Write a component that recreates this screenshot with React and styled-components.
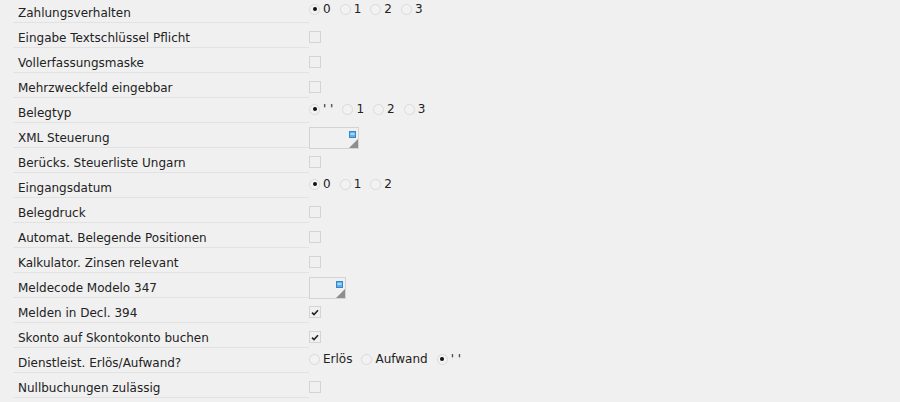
import React from 'react';
import styled, { createGlobalStyle } from 'styled-components';

const GlobalStyle = createGlobalStyle`
  html, body {
    margin: 0;
    padding: 0;
    background: #f0f0f0;
  }
  body {
    font-family: "DejaVu Sans", Verdana, sans-serif;
    font-size: 12px;
    color: #222;
    overflow: hidden;
  }
`;

const Form = styled.div`
  display: flex;
  flex-direction: column;
  margin-top: -2px;
  padding-left: 13px;
`;

const Row = styled.div`
  display: flex;
  align-items: flex-start;
  height: 25px;
`;

const Label = styled.div`
  box-sizing: border-box;
  width: 296px;
  height: 25px;
  padding: 6px 0 0 5px;
  line-height: 18px;
  border-bottom: 1px solid #e2e2e2;
  white-space: nowrap;
`;

// top offset differs per control kind, as in the original form
const Control = styled.div`
  box-sizing: border-box;
  display: flex;
  align-items: flex-start;
  height: 25px;
  padding-top: ${({ $top }) => $top}px;
`;

const Box = styled.span`
  box-sizing: border-box;
  display: inline-flex;
  align-items: center;
  justify-content: center;
  width: 12px;
  height: 12px;
  border: 1px solid #d4d4d4;
  background: #f0f0f0;
`;

const RadioGroup = styled.div`
  display: flex;
  align-items: center;
  gap: 9px;
`;

const RadioItem = styled.label`
  display: flex;
  align-items: center;
  gap: 3px;
  line-height: 14px;
`;

const Circle = styled.span`
  box-sizing: border-box;
  position: relative;
  width: 11px;
  height: 11px;
  border-radius: 50%;
  border: 1px solid #dadada;
  background: #f2f2f2;

  &::after {
    content: '';
    display: ${({ $on }) => ($on ? 'block' : 'none')};
    position: absolute;
    left: 2.5px;
    top: 2.5px;
    width: 4px;
    height: 4px;
    border-radius: 50%;
    background: #111;
  }
`;

const Combo = styled.div`
  box-sizing: border-box;
  position: relative;
  width: ${({ $w }) => $w}px;
  height: 22px;
  border: 1px solid #d3d3d3;
  background: #f0f0f0;
`;

const ValueHelp = styled.svg`
  position: absolute;
  right: 2px;
  top: 3px;
`;

const Corner = styled.svg`
  position: absolute;
  right: 0;
  bottom: 0;
`;

const Check = () => (
  <svg width="8" height="7" viewBox="0 0 8 7">
    <path d="M1 3.6 L3 5.6 L7 1.2" fill="none" stroke="#222" strokeWidth="1.6" />
  </svg>
);

const Checkbox = ({ checked }) => <Box>{checked && <Check />}</Box>;

const Radios = ({ options, value }) => (
  <RadioGroup>
    {options.map((o) => (
      <RadioItem key={o}>
        <Circle $on={o === value} />
        <span>{o}</span>
      </RadioItem>
    ))}
  </RadioGroup>
);

const ComboBox = ({ width }) => (
  <Combo $w={width}>
    <ValueHelp width="7" height="7" viewBox="0 0 7 7">
      <rect x="0.5" y="0.5" width="6" height="6" fill="#5fb0e6" stroke="#2f8ad0" />
      <rect x="1.5" y="2.5" width="4" height="1" fill="#fff" />
    </ValueHelp>
    <Corner width="9" height="9" viewBox="0 0 9 9">
      <polygon points="9,0 9,9 0,9" fill="#8e8e8e" />
    </Corner>
  </Combo>
);

const rows = [
  { label: 'Zahlungsverhalten', type: 'radio', options: ['0', '1', '2', '3'], value: '0' },
  { label: 'Eingabe Textschlüssel Pflicht', type: 'check' },
  { label: 'Vollerfassungsmaske', type: 'check' },
  { label: 'Mehrzweckfeld eingebbar', type: 'check' },
  { label: 'Belegtyp', type: 'radio', options: ["' '", '1', '2', '3'], value: "' '" },
  { label: 'XML Steuerung', type: 'combo', width: 50 },
  { label: 'Berücks. Steuerliste Ungarn', type: 'check' },
  { label: 'Eingangsdatum', type: 'radio', options: ['0', '1', '2'], value: '0' },
  { label: 'Belegdruck', type: 'check' },
  { label: 'Automat. Belegende Positionen', type: 'check' },
  { label: 'Kalkulator. Zinsen relevant', type: 'check' },
  { label: 'Meldecode Modelo 347', type: 'combo', width: 37 },
  { label: 'Melden in Decl. 394', type: 'check', checked: true },
  { label: 'Skonto auf Skontokonto buchen', type: 'check', checked: true },
  { label: 'Dienstleist. Erlös/Aufwand?', type: 'radio', options: ['Erlös', 'Aufwand', "' '"], value: "' '" },
  { label: 'Nullbuchungen zulässig', type: 'check' },
];

const topOffset = { radio: 4, combo: 4, check: 8 };

const renderControl = (r) => {
  if (r.type === 'radio') return <Radios options={r.options} value={r.value} />;
  if (r.type === 'combo') return <ComboBox width={r.width} />;
  return <Checkbox checked={r.checked} />;
};

export default function App() {
  return (
    <>
      <GlobalStyle />
      <Form>
        {rows.map((r) => (
          <Row key={r.label}>
            <Label>{r.label}</Label>
            <Control $top={topOffset[r.type]}>{renderControl(r)}</Control>
          </Row>
        ))}
      </Form>
    </>
  );
}
